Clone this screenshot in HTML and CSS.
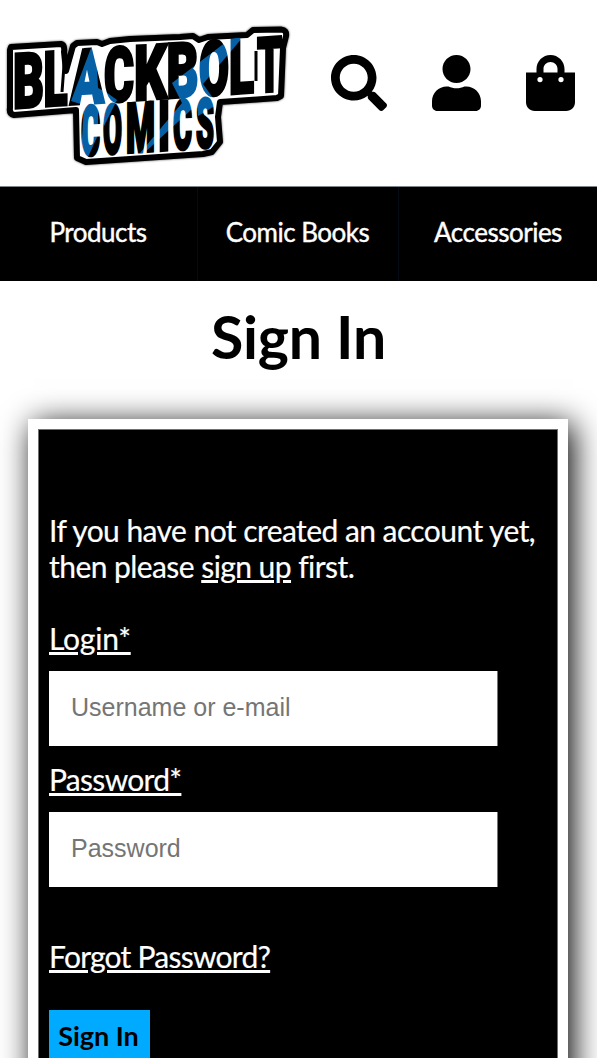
FILE: index.html
```html
<!DOCTYPE html>
<html lang="en">
<head>
<meta charset="utf-8">
<meta name="viewport" content="width=device-width, initial-scale=1">
<title>Sign In - Blackbolt Comics</title>
<link rel="stylesheet" href="styles.css">
</head>
<body>
<header class="header">
  <svg class="logo" viewBox="0 20 297 150" role="img" aria-label="Blackbolt Comics">
    <defs>
      <pattern id="bolt" patternUnits="userSpaceOnUse" width="600" height="600" patternTransform="skewY(3.75)">
        <rect width="600" height="600" fill="#000"/>
        <path fill="#0560a6" d="M91 48L71 101L84 105L81 157L88 157L98 135L98 105L104 126L117 100L106 92L98 88L96 48Z"/>
        <path fill="#0560a6" d="M230 39L243 37L203 84L213 98L213 107L198 116L197 99L192 109L144 153L140 153L182 103L172 83Z"/>
      </pattern>
    </defs>
    <path class="plate" d="M11 47L61 44Q65 45 64 52L66 71L73 46L77 43L97 42L102 44L110 41L130 39L180 37L193 36L199 40L208 37L247 35L253 30L281 29.500Q287 30 286 36L283 48L281 96L277 98L220 102L218 117L220 142L212 152L203 154L86 162L77 158L76 110L14 115Q9 114 10 108V50Z"/>
    <path class="notch" d="M256 51V81M65 52L62 92"/>
    <text class="mark mark-top" transform="skewY(-3.75)" y="109"><tspan x="13" textLength="31" lengthAdjust="spacingAndGlyphs">B</tspan><tspan x="43.500" textLength="24" lengthAdjust="spacingAndGlyphs">L</tspan><tspan x="70" textLength="34" lengthAdjust="spacingAndGlyphs">A</tspan><tspan x="104" textLength="30" lengthAdjust="spacingAndGlyphs">C</tspan><tspan x="134" textLength="33" lengthAdjust="spacingAndGlyphs">K</tspan><tspan x="166.500" textLength="32" lengthAdjust="spacingAndGlyphs">B</tspan><tspan x="199" textLength="30" lengthAdjust="spacingAndGlyphs">O</tspan><tspan x="229" textLength="25" lengthAdjust="spacingAndGlyphs">L</tspan><tspan x="257" textLength="25" lengthAdjust="spacingAndGlyphs">T</tspan></text>
    <text class="mark mark-bottom" transform="skewY(-3.75)" y="161"><tspan x="81" textLength="19" lengthAdjust="spacingAndGlyphs">C</tspan><tspan x="103" textLength="19" lengthAdjust="spacingAndGlyphs">O</tspan><tspan x="126" textLength="29" lengthAdjust="spacingAndGlyphs">M</tspan><tspan x="158" textLength="12" lengthAdjust="spacingAndGlyphs">I</tspan><tspan x="173" textLength="19" lengthAdjust="spacingAndGlyphs">C</tspan><tspan x="196" textLength="18" lengthAdjust="spacingAndGlyphs">S</tspan></text>
  </svg>
  <div class="tools">
    <svg class="tool" viewBox="0 0 512 512"><path d="M505 442.700 405.300 343c-4.500-4.500-10.600-7-17-7H372c27.600-35.300 44-79.700 44-128C416 93.100 322.900 0 208 0S0 93.100 0 208s93.100 208 208 208c48.300 0 92.700-16.400 128-44v16.300c0 6.400 2.500 12.500 7 17l99.700 99.700c9.400 9.400 24.600 9.400 33.900 0l28.300-28.300c9.400-9.400 9.400-24.600.1-34zM208 336c-70.700 0-128-57.200-128-128 0-70.700 57.200-128 128-128 70.700 0 128 57.200 128 128 0 70.700-57.200 128-128 128z"/></svg>
    <svg class="tool narrow" viewBox="0 0 448 512"><path d="M224 256c70.700 0 128-57.300 128-128S294.700 0 224 0 96 57.300 96 128s57.300 128 128 128zm89.600 32h-16.700c-22.200 10.200-46.900 16-72.900 16s-50.600-5.800-72.900-16h-16.700C60.200 288 0 348.200 0 422.400V464c0 26.500 21.500 48 48 48h352c26.500 0 48-21.500 48-48v-41.600c0-74.200-60.200-134.400-134.400-134.400z"/></svg>
    <svg class="tool narrow" viewBox="0 0 448 512"><path d="M352 160v-32C352 57.400 294.600 0 224 0S96 57.400 96 128v32H0v272c0 44.200 35.800 80 80 80h288c44.200 0 80-35.800 80-80V160zm-192-32c0-35.300 28.700-64 64-64s64 28.700 64 64v32H160zm160 120a24 24 0 1 1 0-48 24 24 0 0 1 0 48zm-192 0a24 24 0 1 1 0-48 24 24 0 0 1 0 48z"/></svg>
  </div>
</header>
<nav class="nav">
  <a class="nav-item">Products</a>
  <a class="nav-item">Comic Books</a>
  <a class="nav-item">Accessories</a>
</nav>
<main class="main">
  <h1 class="title">Sign In</h1>
  <form class="card">
    <p class="intro">If you have not created an account yet,<br>then please <a class="link">sign up</a> first.</p>
    <label class="label label-login" for="login">Login*</label>
    <input class="field" id="login" type="text" placeholder="Username or e-mail">
    <label class="label label-password" for="password">Password*</label>
    <input class="field" id="password" type="password" placeholder="Password">
    <a class="forgot">Forgot Password?</a>
    <button class="submit" type="button">Sign In</button>
  </form>
</main>
</body>
</html>
```
FILE: styles.css
```css
* { box-sizing: border-box; }
body {
  margin: 0;
  background: #fff;
  color: #000;
  font-family: Lato, "Open Sans", sans-serif;
}
.header {
  display: flex;
  height: 187px;
  padding-top: 20px;
  border-bottom: 1px solid #7c8589;
}
.logo { flex: none; width: 297px; height: 150px; overflow: visible; }
.plate {
  fill: #fff;
  stroke: #000;
  stroke-width: 6;
  stroke-linejoin: round;
  filter: drop-shadow(0 0 1px #555);
}
.notch {
  fill: none;
  stroke: #000;
  stroke-width: 3;
}
.mark {
  font-family: Roboto, "Liberation Sans", sans-serif;
  font-weight: 900;
  fill: url(#bolt);
  stroke: url(#bolt);
  stroke-width: 3;
}
.mark-top { font-size: 76px; }
.mark-bottom { font-size: 69px; }
.tools {
  display: flex;
  gap: 45px;
  padding: 35px 0 0 34px;
}
.tool { width: 56px; height: 56px; }
.tool.narrow { width: 49px; }
.nav {
  display: grid;
  grid-template-columns: 198px 201px 198px;
  height: 94px;
  background: #000;
  color: #fff;
  font-size: 26px;
  line-height: 32px;
  text-align: center;
}
.nav-item {
  padding: 29px 1px 0 0;
  border-right: 1px solid #040b14;
  white-space: nowrap;
  letter-spacing: -0.5px;
  -webkit-text-stroke: 0.4px #fff;
}
.nav-item:last-child { padding-right: 0; border-right: 0; }
.main { height: 777px; overflow: hidden; }
.title {
  margin: 0;
  padding-top: 18px;
  height: 138px;
  font-size: 59px;
  line-height: 76px;
  font-weight: 700;
  letter-spacing: -0.2px;
  text-align: center;
}
.card {
  display: flex;
  flex-direction: column;
  align-items: flex-start;
  width: 540px;
  height: 760px;
  margin-left: 28px;
  padding: 83px 11px 0;
  border: 10px solid #fff;
  outline: 1px solid #707070;
  outline-offset: -11px;
  background: #000;
  color: #fff;
  box-shadow: 5px 5px 30px #000;
  font-size: 30px;
  line-height: 36px;
  letter-spacing: -0.56px;
  -webkit-text-stroke: 0.2px #fff;
}
.intro { margin: 0 0 36px; white-space: nowrap; }
.link, .label, .forgot {
  text-decoration: underline;
  text-decoration-thickness: 3px;
  text-underline-offset: 2px;
}
.label-login { letter-spacing: -0.2px; }
.label-password { letter-spacing: -0.7px; }
.field {
  width: 449px;
  height: 75px;
  margin: 15px 0 15px;
  padding: 0 22px 2px;
  border: 0;
  border-right: 1px solid #767676;
  background: #fff;
  font: 25px/30px "Liberation Sans", Arial, sans-serif;
  -webkit-text-stroke: 0;
}
.field::placeholder { color: #757575; }
.forgot { margin: 36px 0; letter-spacing: -0.75px; }
.submit {
  width: 101px;
  height: 54px;
  padding: 0 2px 2px 0;
  border: 0;
  background: #00aaff;
  color: #000;
  font: 700 27px/34px Lato, sans-serif;
  -webkit-text-stroke: 0;
}
```
